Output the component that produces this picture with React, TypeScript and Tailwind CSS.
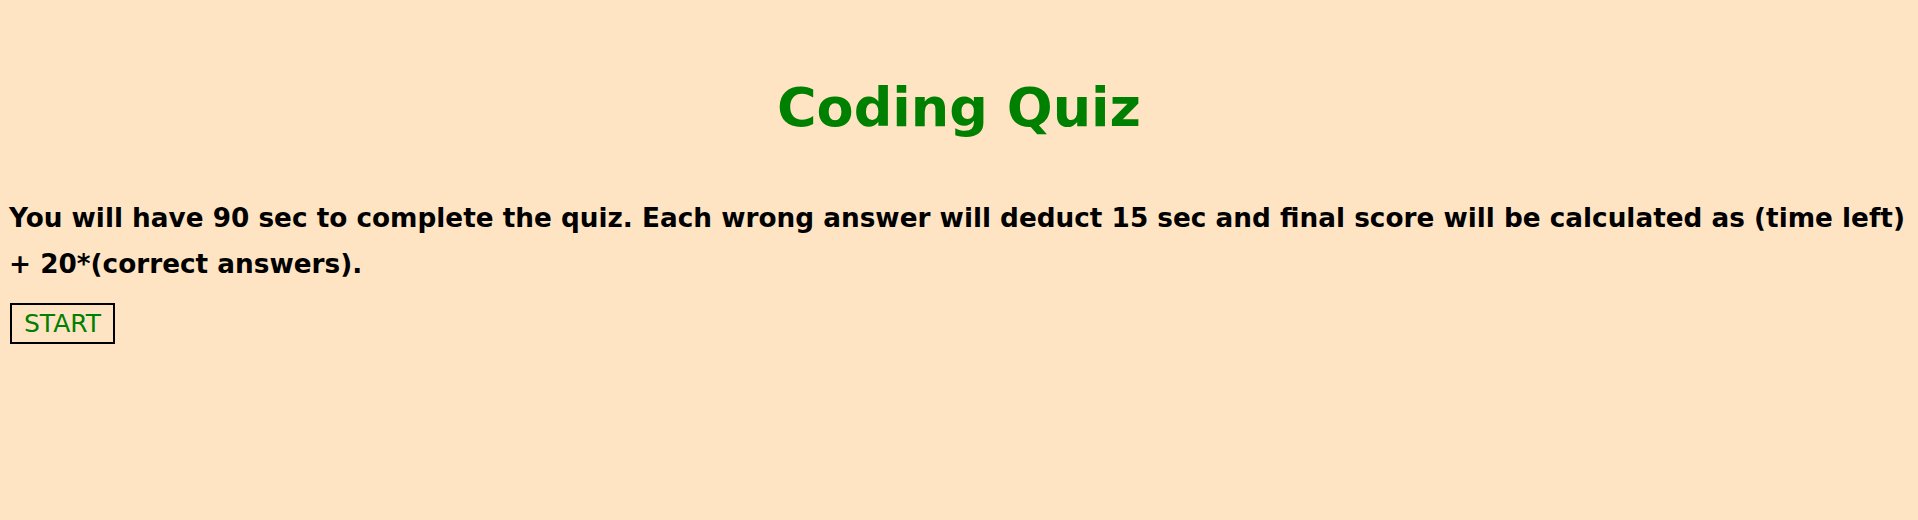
import React from "react";

export default function App() {
  return (
    <div className="min-h-[520px] w-full bg-[#ffe4c4] font-['DejaVu_Sans',sans-serif] text-black">
      <div className="pt-[81px]">
        <h1 className="text-center text-[54px] font-bold leading-none text-[#008000]">
          Coding Quiz
        </h1>
      </div>

      <p className="mt-[60px] pl-[9px] pr-[3px] text-[26.3px] font-bold leading-[46px]">
        You will have 90 sec to complete the quiz. Each wrong answer will deduct
        15 sec and final score will be calculated as (time left) +
        20*(correct answers).
      </p>

      <div className="mt-[16px] px-[10px]">
        <button
          type="button"
          className="flex h-[41px] items-center border-2 border-black px-[12px] text-[25px] text-[#008000]"
        >
          START
        </button>
      </div>
    </div>
  );
}
